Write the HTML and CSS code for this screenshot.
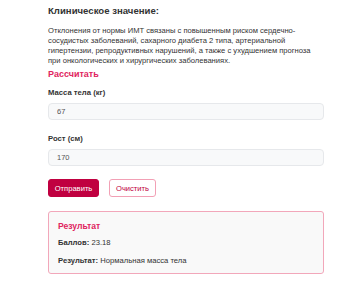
FILE: index.html
```
<!DOCTYPE html>
<html lang="ru">
<head>
<meta charset="utf-8">
<link rel="stylesheet" href="styles.css">
</head>
<body>
<div class="page">
  <h3 class="title">Клиническое значение:</h3>
  <p class="text">Отклонения от нормы ИМТ связаны с повышенным риском сердечно-сосудистых заболеваний, сахарного диабета 2 типа, артериальной гипертензии, репродуктивных нарушений, а также с ухудшением прогноза при онкологических и хирургических заболеваниях.</p>
  <h4 class="calc">Рассчитать</h4>
  <form class="form">
    <label class="label">Масса тела (кг)</label>
    <input class="input" type="text" value="67">
    <label class="label">Рост (см)</label>
    <input class="input" type="text" value="170">
    <div class="buttons">
      <button type="button" class="btn primary">Отправить</button>
      <button type="button" class="btn secondary">Очистить</button>
    </div>
  </form>
  <div class="result">
    <div class="result-title">Результат</div>
    <div class="result-row"><b>Баллов:</b> 23.18</div>
    <div class="result-row"><b>Результат:</b> Нормальная масса тела</div>
  </div>
</div>
</body>
</html>
```
FILE: styles.css
```
html, body {
  margin: 0;
  padding: 0;
  background: #fff;
}
body {
  font-family: "Liberation Sans", Arial, sans-serif;
  color: #333;
}
.page {
  width: 276px;
  margin-left: 48px;
  padding-top: 5px;
}
.title {
  margin: 0;
  font-size: 9.6px;
  line-height: 12px;
  font-weight: bold;
  color: #333;
}
.text {
  margin: 9px 0 0;
  font-size: 7.6px;
  line-height: 10px;
  color: #333;
}
.calc {
  margin: 2px 0 0;
  font-size: 9px;
  line-height: 12px;
  font-weight: bold;
  color: #e0245e;
}
.form {
  display: flex;
  flex-direction: column;
  margin: 0;
}
.label {
  margin-top: 8px;
  font-size: 7.7px;
  line-height: 10px;
  font-weight: bold;
  color: #333;
}
.input {
  box-sizing: border-box;
  margin: 5px 0 0;
  height: 17px;
  width: 276px;
  padding: 0 8px;
  border: 1px solid #e6e8eb;
  border-radius: 4px;
  background: #f8f9fa;
  font-family: "Liberation Sans", Arial, sans-serif;
  font-size: 7.5px;
  color: #555;
  outline: none;
}
.input + .label {
  margin-top: 14px;
}
.buttons {
  display: flex;
  gap: 10px;
  margin-top: 13px;
}
.btn {
  box-sizing: border-box;
  height: 18px;
  padding: 0 4px;
  border-radius: 3px;
  font-family: "Liberation Sans", Arial, sans-serif;
  font-size: 7.6px;
  cursor: pointer;
}
.primary {
  background: #c00040;
  border: 1px solid #c00040;
  color: #fff;
  width: 51px;
}
.secondary {
  background: #fff;
  border: 1px solid #f2a0b5;
  color: #c00040;
  width: 47px;
}
.result {
  box-sizing: border-box;
  margin-top: 14px;
  width: 276px;
  height: 63px;
  padding: 8px 9px;
  border: 1.5px solid #f2a7ba;
  border-radius: 3px;
  background: #f9f9f9;
}
.result-title {
  font-size: 8.6px;
  line-height: 12px;
  font-weight: bold;
  color: #e0245e;
}
.result-row {
  margin-top: 6px;
  font-size: 7.65px;
  line-height: 10px;
  color: #333;
}
.result-row + .result-row {
  margin-top: 8px;
}
```
